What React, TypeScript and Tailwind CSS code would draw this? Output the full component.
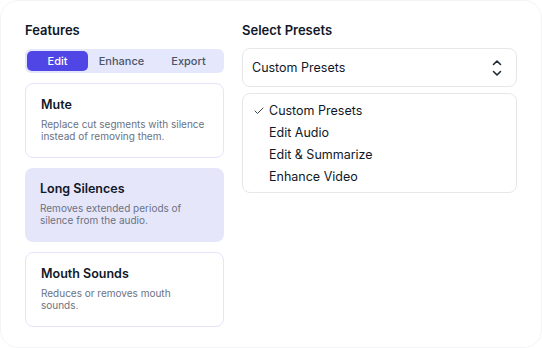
import { Check } from "lucide-react";

const features = [
  { title: "Mute", desc: "Replace cut segments with silence instead of removing them.", active: false },
  { title: "Long Silences", desc: "Removes extended periods of silence from the audio.", active: true },
  { title: "Mouth Sounds", desc: "Reduces or removes mouth sounds.", active: false },
];

const presets = ["Custom Presets", "Edit Audio", "Edit & Summarize", "Enhance Video"];

export default function App() {
  return (
    <div
      className="w-[542px] h-[348px] bg-white"
      style={{ fontFamily: "Inter, 'Noto Sans', sans-serif" }}
    >
      <div className="h-full rounded-[18px] border border-gray-100 flex gap-[18px] px-[24px] pt-[21px]">
        {/* Left column - features */}
        <div className="w-[199px] flex flex-col">
          <h3 className="text-[13px] leading-4 font-semibold text-gray-900">Features</h3>
          <div className="mt-[11px] h-6 rounded-md bg-[#e5e7fd] p-[2px] flex text-[11px] font-medium">
            <button className="w-[61px] rounded-[5px] bg-[#4f46e5] text-white">Edit</button>
            <button className="flex-1 text-gray-600">Enhance</button>
            <button className="flex-1 text-gray-600">Export</button>
          </div>
          <div className="mt-[10px] flex flex-col gap-[10px]">
            {features.map((f) => (
              <div
                key={f.title}
                className={
                  f.active
                    ? "h-[74px] rounded-lg bg-[#e6e6fb] px-[15px] pt-[13px]"
                    : "h-[75px] rounded-lg border border-[#e4e4fb] bg-white px-[15px] pt-[13px]"
                }
              >
                <div className="text-[12.5px] leading-4 font-semibold text-gray-900">{f.title}</div>
                <p className="mt-[5px] text-[10px] leading-3 text-gray-500">{f.desc}</p>
              </div>
            ))}
          </div>
        </div>

        {/* Right column - presets */}
        <div className="w-[275px] flex flex-col">
          <h3 className="text-[13px] leading-4 font-semibold text-gray-900">Select Presets</h3>
          <div className="mt-[10px] h-[39px] rounded-lg border border-gray-200 flex items-center justify-between pl-[9px] pr-[14px]">
            <span className="pt-[2px] text-[12.5px] text-gray-900">Custom Presets</span>
            <svg width="10" height="18" viewBox="0 0 10 18" fill="none" stroke="#1f2937" strokeWidth="1.6" strokeLinecap="round" strokeLinejoin="round">
              <path d="M1.5 5.5 L5 2 L8.5 5.5" />
              <path d="M1.5 12.5 L5 16 L8.5 12.5" />
            </svg>
          </div>
          <div className="mt-[6px] rounded-lg border border-gray-200 pt-[6px] pb-[4px]">
            {presets.map((p, i) => (
              <div key={p} className="h-[22px] flex items-center pl-[10px] text-[12.5px] text-gray-900">
                <span className="w-4 flex">
                  {i === 0 && <Check className="w-3 h-3 text-gray-800" strokeWidth={1.75} />}
                </span>
                {p}
              </div>
            ))}
          </div>
        </div>
      </div>
    </div>
  );
}
